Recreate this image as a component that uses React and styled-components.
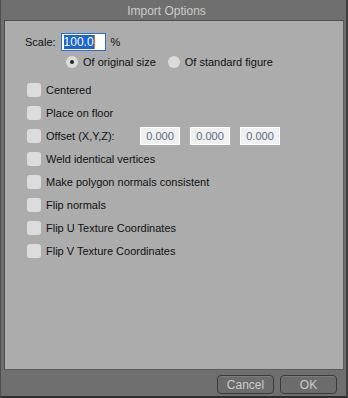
import styled, { createGlobalStyle } from "styled-components";

const GlobalStyle = createGlobalStyle`
  html, body {
    margin: 0;
    padding: 0;
    background: #6e6e6e;
  }
  * {
    box-sizing: border-box;
  }
`;

const Window = styled.div`
  width: 348px;
  height: 398px;
  display: flex;
  flex-direction: column;
  background: #6f6f6f;
  border-left: 1px solid #4e4e4e;
  border-right: 2px solid #3e3e3e;
  border-bottom: 2px solid #2e2e2e;
  font-family: "Liberation Sans", Arial, sans-serif;
  font-size: 11px;
  color: #111;
`;

const TitleBar = styled.div`
  height: 20px;
  display: flex;
  align-items: center;
  justify-content: center;
  color: #cbcbcb;
  font-size: 12px;
  padding: 2px 14px 0 0;
`;

const Panel = styled.div`
  flex: 1;
  margin: 0 2px 0 3px;
  background: #acacac;
  border-top: 1px solid #4f4f4f;
  border-left: 1px solid #4f4f4f;
  border-right: 1px solid #5c5c5c;
  border-bottom: 1px solid #5c5c5c;
  padding: 12px 0 0 20px;
  display: flex;
  flex-direction: column;
`;

const ScaleRow = styled.div`
  display: flex;
  align-items: center;
  gap: 5px;
  height: 18px;
`;

const ScaleInput = styled.div`
  width: 45px;
  height: 18px;
  background: #ffffff;
  border: 1px solid #2a6fd6;
  padding: 1px 2px;
  display: flex;
  align-items: center;
  font-size: 12px;
`;

const Selected = styled.span`
  background: #1a64d4;
  color: #ffffff;
  line-height: 14px;
  border-right: 1px solid #e07020;
`;

const RadioRow = styled.div`
  display: flex;
  align-items: center;
  margin: 2px 0 0 41px;
  height: 18px;
  gap: 12px;
`;

const RadioItem = styled.label`
  display: flex;
  align-items: center;
  gap: 5px;
`;

const Radio = styled.span`
  width: 12px;
  height: 12px;
  border-radius: 50%;
  background: #dcdcdc;
  display: flex;
  align-items: center;
  justify-content: center;

  &::after {
    content: "";
    width: 4px;
    height: 4px;
    border-radius: 50%;
    background: ${(p) => (p.$checked ? "#222" : "transparent")};
  }
`;

const Options = styled.div`
  margin-top: 7px;
  display: flex;
  flex-direction: column;
`;

const OptionRow = styled.label`
  height: 23px;
  display: flex;
  align-items: center;
  gap: 5px;
  padding-left: 2px;
`;

const Check = styled.span`
  width: 14px;
  height: 14px;
  border-radius: 3px;
  background: #dcdcdc;
  flex-shrink: 0;
`;

const OffsetLabel = styled.span`
  width: 89px;
`;

const OffsetInput = styled.div`
  width: 40px;
  height: 18px;
  background: #f0f0f0;
  border: 1px solid #ffffff;
  color: #5b6b82;
  font-size: 11px;
  display: flex;
  align-items: center;
  justify-content: center;
  margin-right: 5px;
`;

const Footer = styled.div`
  height: 26px;
  display: flex;
  align-items: flex-end;
  justify-content: flex-end;
  gap: 6px;
  padding: 0 9px 2px 0;
`;

const Button = styled.button`
  width: 57px;
  height: 19px;
  border-radius: 4px;
  border: 1px solid #3a3a3a;
  background: #6c6c6c;
  color: #cbcbcb;
  font-family: "Liberation Sans", Arial, sans-serif;
  font-size: 12px;
  padding: 0;
  box-shadow: inset 0 1px 0 #7c7c7c;
`;

const options = [
  "Centered",
  "Place on floor",
  "Offset",
  "Weld identical vertices",
  "Make polygon normals consistent",
  "Flip normals",
  "Flip U Texture Coordinates",
  "Flip V Texture Coordinates",
];

export default function App() {
  return (
    <>
      <GlobalStyle />
      <Window>
        <TitleBar>Import Options</TitleBar>
        <Panel>
          <ScaleRow>
            <span>Scale:</span>
            <ScaleInput>
              <Selected>100.0</Selected>
            </ScaleInput>
            <span>%</span>
          </ScaleRow>
          <RadioRow>
            <RadioItem>
              <Radio $checked />
              Of original size
            </RadioItem>
            <RadioItem>
              <Radio />
              Of standard figure
            </RadioItem>
          </RadioRow>
          <Options>
            {options.map((o) =>
              o === "Offset" ? (
                <OptionRow key={o}>
                  <Check />
                  <OffsetLabel>Offset (X,Y,Z):</OffsetLabel>
                  <OffsetInput>0.000</OffsetInput>
                  <OffsetInput>0.000</OffsetInput>
                  <OffsetInput>0.000</OffsetInput>
                </OptionRow>
              ) : (
                <OptionRow key={o}>
                  <Check />
                  {o}
                </OptionRow>
              )
            )}
          </Options>
        </Panel>
        <Footer>
          <Button>Cancel</Button>
          <Button>OK</Button>
        </Footer>
      </Window>
    </>
  );
}
